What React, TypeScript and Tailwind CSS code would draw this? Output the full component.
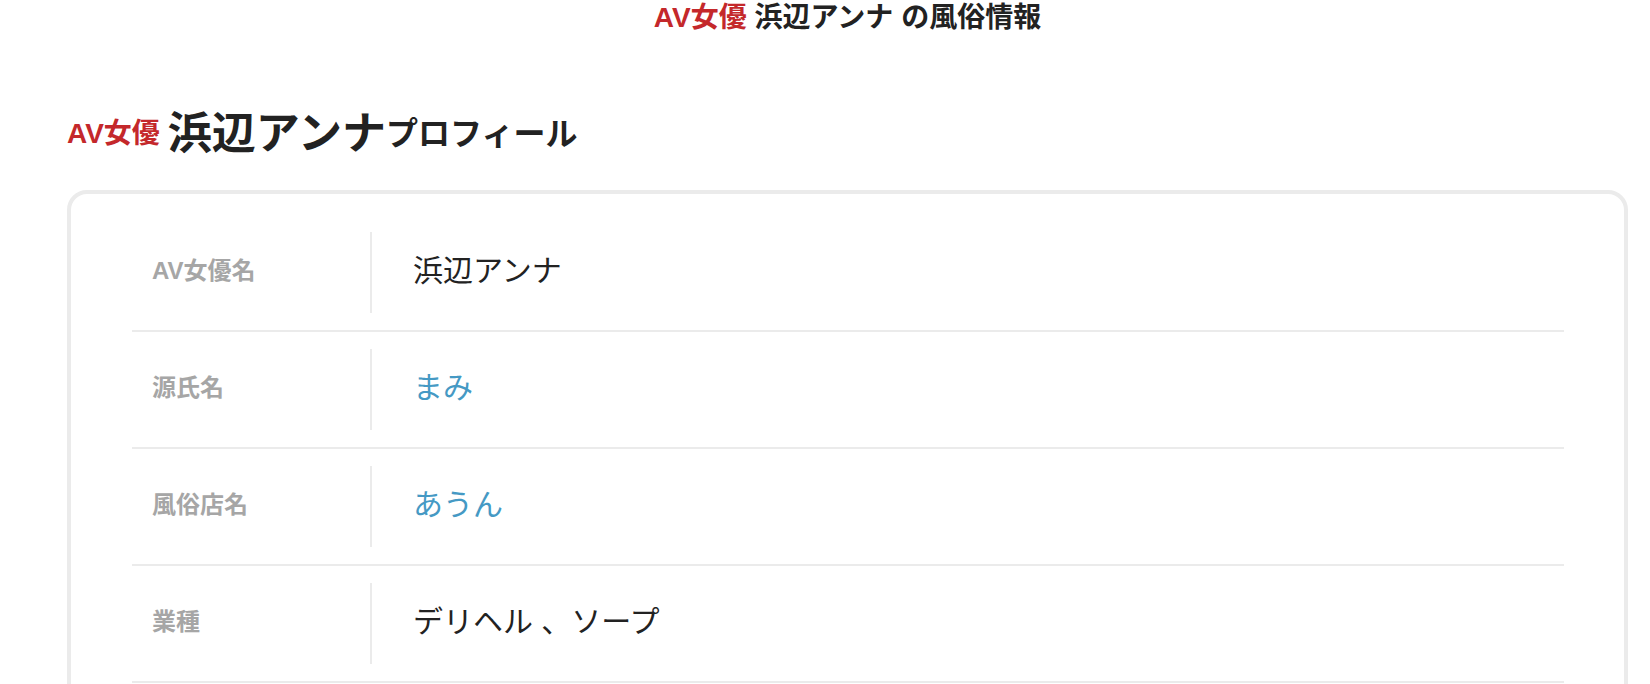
import React from "react";

type Row = { label: string; value: string; link?: boolean };

const rows: Row[] = [
  { label: "AV女優名", value: "浜辺アンナ" },
  { label: "源氏名", value: "まみ", link: true },
  { label: "風俗店名", value: "あうん", link: true },
  { label: "業種", value: "デリヘル 、ソープ" },
];

const font = {
  fontFamily: '"Liberation Sans", "Noto Sans CJK JP", "Noto Sans", sans-serif',
};

const ProfileRow = ({ label, value, link }: Row) => {
  return (
    <div className="flex border-b-2 border-[#ebebeb] py-[17px]">
      <div className="flex h-[81px] w-[240px] shrink-0 items-center border-r-2 border-[#ebebeb] pb-[4px] pl-5 text-[24px] font-bold text-[#a6a6a6]">
        {label}
      </div>
      <div
        className={
          link
            ? "flex items-center pb-[4px] pl-[41px] text-[30px] text-[#4599c4]"
            : "flex items-center pb-[4px] pl-[41px] text-[30px] text-[#222222]"
        }
      >
        {link ? <a href="#">{value}</a> : value}
      </div>
    </div>
  );
};

export default function App() {
  return (
    <div className="min-h-screen bg-white" style={font}>
      <div className="ml-[67px] w-[1561px]">
        <p className="text-center text-[28px] font-bold leading-[36px] text-[#222222]">
          <span className="text-[#c4282b]">AV女優</span> 浜辺アンナ の風俗情報
        </p>

        <h2 className="mt-[65px] mb-[23px] flex h-[66px] items-center font-bold text-[#222222]">
          <span className="text-[28px] text-[#c4282b]">AV女優</span>
          <span className="ml-2 text-[44px]">浜辺アンナ</span>
          <span className="text-[32px]">プロフィール</span>
        </h2>

        <div className="rounded-[20px] border-4 border-[#ebebeb] pt-[21px] pr-[60px] pb-[40px] pl-[61px]">
          {rows.map((r, i) => (
            <ProfileRow {...r} key={i} />
          ))}
        </div>
      </div>
    </div>
  );
}
